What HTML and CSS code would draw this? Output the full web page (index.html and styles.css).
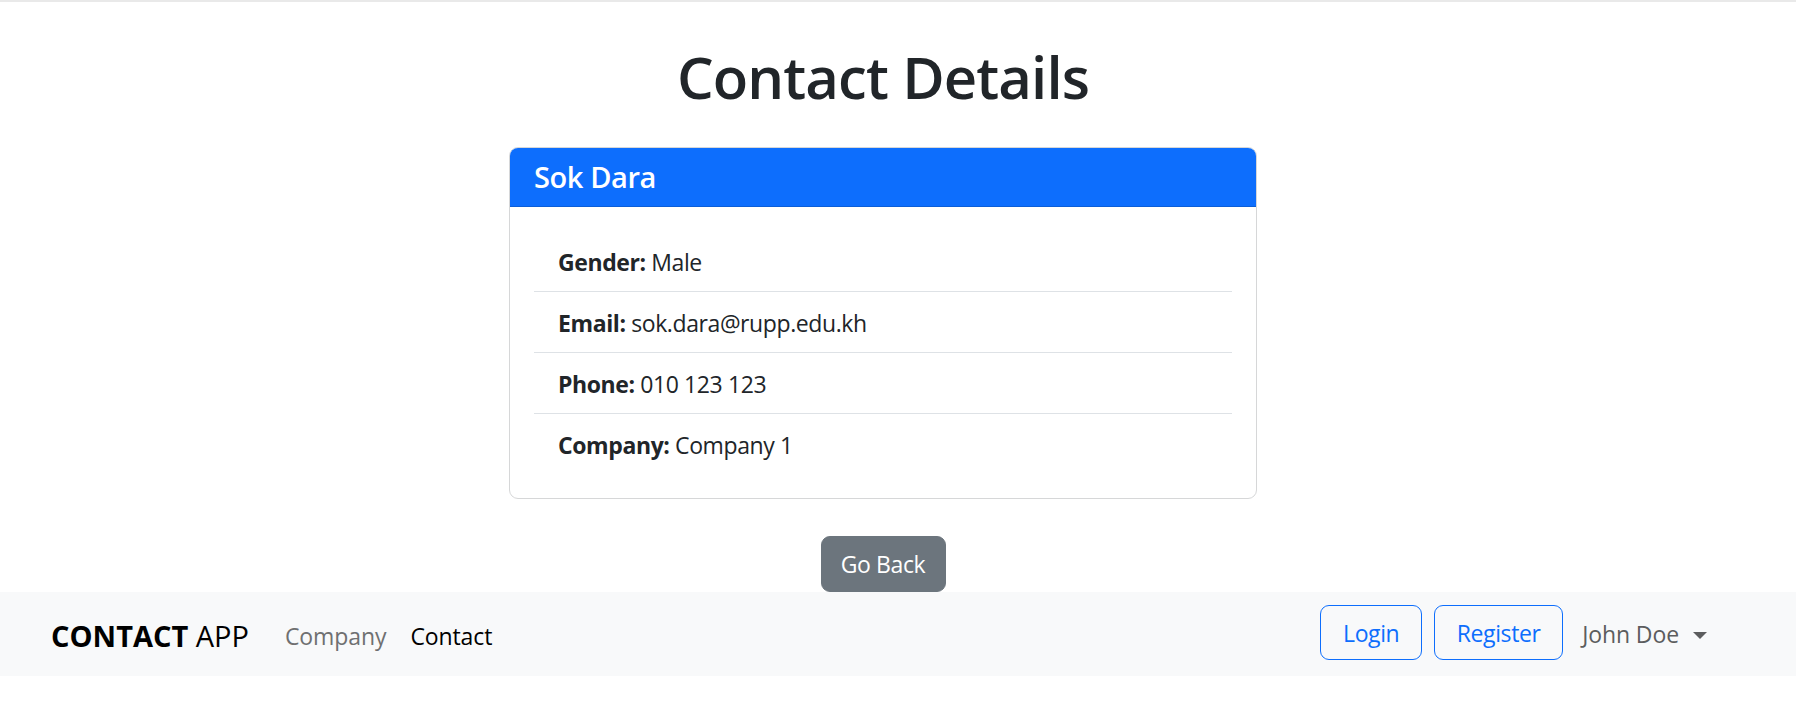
FILE: index.html
```html
<!DOCTYPE html>
<html lang="en">
<head>
<meta charset="utf-8">
<title>Contact Details</title>
<link rel="stylesheet" href="styles.css">
</head>
<body>
<div class="topline"></div>
<main class="content">
  <h1 class="title">Contact Details</h1>
  <section class="card">
    <header class="card-header">
      <h5 class="card-title">Sok Dara</h5>
    </header>
    <div class="card-body">
      <ul class="list">
        <li class="list-item"><strong>Gender:</strong> Male</li>
        <li class="list-item"><strong>Email:</strong> sok.dara@rupp.edu.kh</li>
        <li class="list-item"><strong>Phone:</strong> 010 123 123</li>
        <li class="list-item"><strong>Company:</strong> Company 1</li>
      </ul>
    </div>
  </section>
  <a class="btn-back" href="#">Go Back</a>
</main>
<nav class="navbar">
  <a class="brand" href="#"><strong>CONTACT</strong> APP</a>
  <ul class="nav-links">
    <li><a class="nav-link" href="#">Company</a></li>
    <li><a class="nav-link active" href="#">Contact</a></li>
  </ul>
  <div class="nav-right">
    <a class="btn-outline btn-login" href="#">Login</a>
    <a class="btn-outline btn-register" href="#">Register</a>
    <a class="nav-link dropdown-toggle" href="#">John Doe</a>
  </div>
</nav>
</body>
</html>
```

FILE: styles.css
```css
* {
  box-sizing: border-box;
}

html, body {
  margin: 0;
  padding: 0;
  background: #ffffff;
}

body {
  font-family: "Open Sans", "Noto Sans", "Liberation Sans", sans-serif;
  color: #212529;
  font-size: 23px;
  line-height: 36px;
  letter-spacing: -0.4px;
}

a {
  text-decoration: none;
}

.topline {
  height: 2px;
  background: #e9e9e9;
}

.content {
  width: 1766px;
  display: flex;
  flex-direction: column;
  align-items: center;
}

.title {
  margin: 39px 0 34px;
  font-size: 58px;
  line-height: 72px;
  font-weight: 600;
  letter-spacing: -0.9px;
  color: #212529;
  text-align: center;
}

.card {
  width: 748px;
  border: 1px solid #d6d7d8;
  border-radius: 9px;
  overflow: hidden;
  background: #ffffff;
}

.card-header {
  background: #0d6efd;
  padding: 11px 24px;
  border-bottom: 1px solid #0b5ed7;
}

.card-title {
  margin: 0;
  font-size: 29px;
  line-height: 36px;
  font-weight: 600;
  letter-spacing: -0.4px;
  color: #ffffff;
}

.card-body {
  padding: 24px;
}

.list {
  list-style: none;
  margin: 0;
  padding: 0;
}

.list-item {
  padding: 13px 24px 11px;
  border-bottom: 1px solid #dee2e6;
  color: #212529;
}

.list-item:last-child {
  border-bottom: 0;
}

.list-item strong {
  font-weight: 700;
}

.btn-back {
  display: block;
  width: 125px;
  margin-top: 37px;
  padding: 9px 0;
  border: 1px solid #6c757d;
  border-radius: 9px;
  background: #6c757d;
  color: #ffffff;
  text-align: center;
  line-height: 36px;
}

.navbar {
  display: flex;
  align-items: center;
  height: 84px;
  padding: 0 77px 0 51px;
  background: #f8f9fa;
}

.brand {
  font-size: 29px;
  line-height: 45px;
  letter-spacing: 0;
  color: #000000;
  margin-right: 24px;
  padding-top: 2px;
}

.brand strong {
  font-weight: 700;
}

.nav-links {
  display: flex;
  list-style: none;
  margin: 0;
  padding: 0;
}

.nav-link {
  display: block;
  padding: 8px 12px 4px;
  color: #6f7071;
  line-height: 36px;
  letter-spacing: -0.1px;
}

.nav-link.active {
  color: #000000;
}

.nav-right {
  margin-left: auto;
  display: flex;
  align-items: center;
  gap: 12px;
}

.btn-outline {
  display: block;
  height: 55px;
  border: 1px solid #0d6efd;
  border-radius: 9px;
  color: #0d6efd;
  text-align: center;
  line-height: 36px;
  padding: 9px 0;
  margin-top: -4px;
}

.btn-login {
  width: 102px;
}

.btn-register {
  width: 129px;
  margin-right: 1px;
}

.dropdown-toggle {
  display: flex;
  align-items: center;
  color: #5c5d5e;
  padding: 6px 12px 6px 6px;
}

.dropdown-toggle::after {
  content: "";
  display: inline-block;
  margin-left: 14px;
  margin-top: 2px;
  border-top: 7px solid #5c5d5e;
  border-left: 7px solid transparent;
  border-right: 7px solid transparent;
}
```
